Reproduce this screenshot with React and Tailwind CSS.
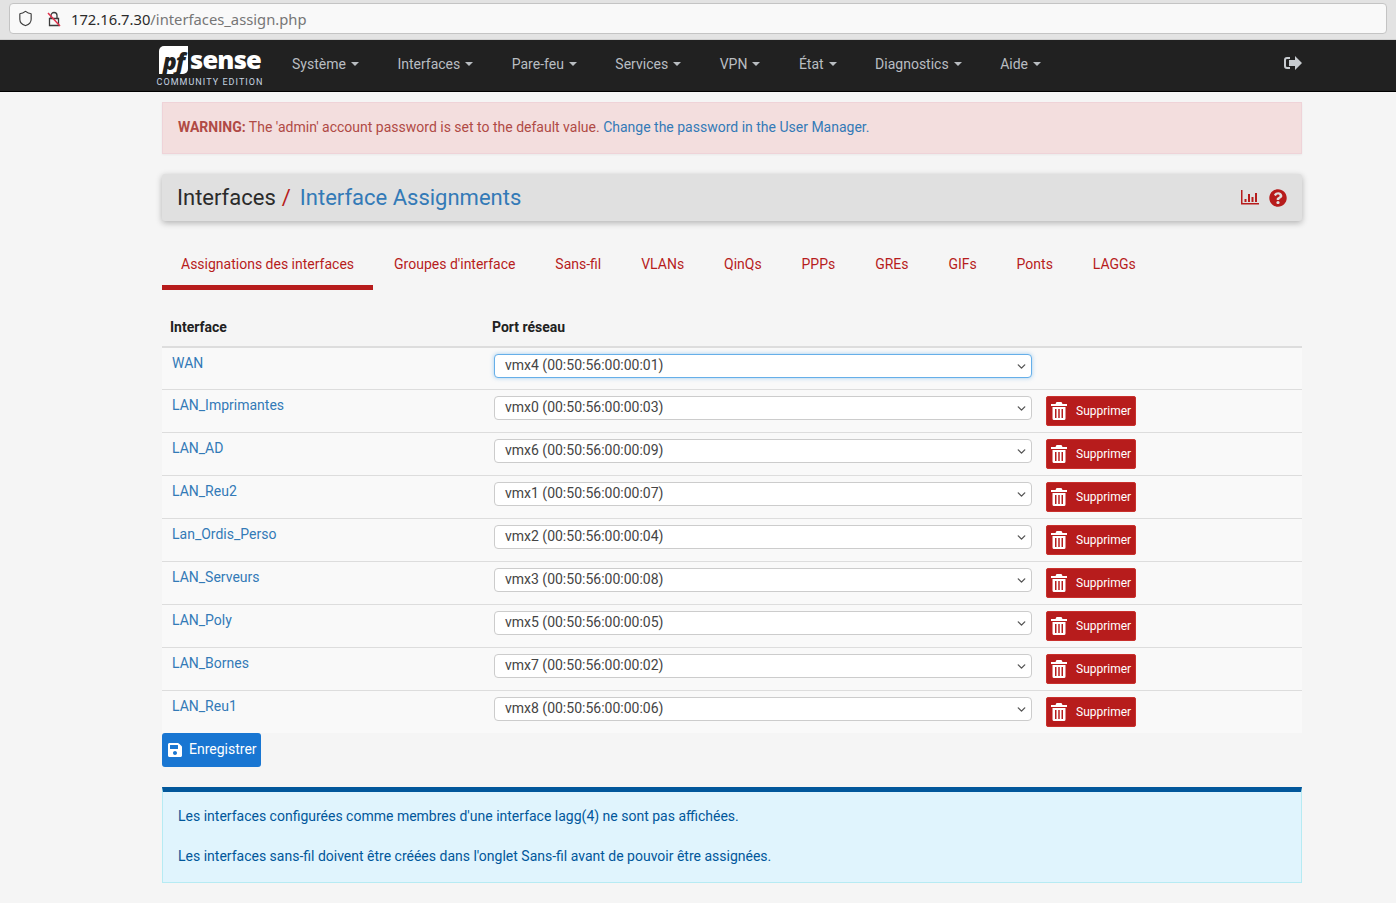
import { ChevronDown, Shield } from 'lucide-react';
import { FaSave, FaQuestionCircle } from 'react-icons/fa';

const menu = ['Système', 'Interfaces', 'Pare-feu', 'Services', 'VPN', 'État', 'Diagnostics', 'Aide'];
const tabs = ['Groupes d\'interface', 'Sans-fil', 'VLANs', 'QinQs', 'PPPs', 'GREs', 'GIFs', 'Ponts', 'LAGGs'];
const rows = [
  ['WAN', 'vmx4 (00:50:56:00:00:01)'],
  ['LAN_Imprimantes', 'vmx0 (00:50:56:00:00:03)'],
  ['LAN_AD', 'vmx6 (00:50:56:00:00:09)'],
  ['LAN_Reu2', 'vmx1 (00:50:56:00:00:07)'],
  ['Lan_Ordis_Perso', 'vmx2 (00:50:56:00:00:04)'],
  ['LAN_Serveurs', 'vmx3 (00:50:56:00:00:08)'],
  ['LAN_Poly', 'vmx5 (00:50:56:00:00:05)'],
  ['LAN_Bornes', 'vmx7 (00:50:56:00:00:02)'],
  ['LAN_Reu1', 'vmx8 (00:50:56:00:00:06)'],
];

const TrashIcon = () => (
  <svg width="16" height="18" viewBox="0 0 16 18" fill="white" aria-hidden="true">
    <path d="M5.5 0h5l1 2H16v2H0V2h4.500z" />
    <path fillRule="evenodd" d="M1.500 5h13v11.500a1.500 1.500 0 01-1.500 1.500H3a1.500 1.500 0 01-1.500-1.500zM4 7v9h1.500V7zm3.250 0v9h1.500V7zM10.500 7v9H12V7z" />
  </svg>
);

const SignOutIcon = () => (
  <svg width="18" height="14" viewBox="0 0 18 14" fill="#c8ccd0" aria-hidden="true">
    <path d="M6 1H3a3 3 0 00-3 3v6a3 3 0 003 3h3v-2H3a1 1 0 01-1-1V4a1 1 0 011-1h3z" />
    <path d="M11 0l7 7-7 7v-4H5V4h6z" />
  </svg>
);

const ChartIcon = () => (
  <svg width="18" height="15" viewBox="0 0 18 15" fill="#b71c1c" aria-hidden="true">
    <path d="M0 0h1.500v13H18v1.500H0z" />
    <path d="M3.500 9H5.500v3h-2zM7 4h2v8H7zM10.500 7h2v5h-2zM14 3h2v9h-2z" />
  </svg>
);

const App = () => {
  return (
    <div className="min-h-[903px] bg-[#f5f5f5] font-['Roboto',sans-serif] text-sm text-[#212121]">
      <div className="h-10 bg-[#e3e3e3] px-[9px] pt-[3px] border-b border-[#cfcfcf]">
        <div className="h-[31px] bg-[#f9f9f9] border border-[#c4c4c4] rounded-[4px] flex items-center pl-[7px] font-['Noto_Sans',sans-serif] text-[14.750px]">
          <Shield size={17} strokeWidth={1.600} className="text-[#3b3b3b]" />
          <svg width="16" height="16" viewBox="0 0 16 16" fill="none" className="ml-[12px]" aria-hidden="true">
            <path d="M5 7V4.500a3 3 0 016 0V7M3.500 7.500h9v7h-9z" stroke="#3b3b3b" strokeWidth="1.300" />
            <path d="M2 2l12 13" stroke="#e0314b" strokeWidth="1.500" />
          </svg>
          <span className="ml-[9px] mt-[3px] text-[#2b2b2b]">172.16.7.30</span>
          <span className="mt-[3px] text-[#767676]">/interfaces_assign.php</span>
        </div>
      </div>

      <nav className="h-[52px] bg-[#212121] border-b border-black flex items-center pl-[157px] pr-[94px]">
        <div className="w-[106px] shrink-0 flex flex-col items-center pt-[2px]">
          <div className="flex items-center h-[29px] pl-[2px] w-full">
            <span className="bg-white text-[#212121] h-[28px] w-[29px] rounded-tl-[5px] rounded-br-[5px] text-[23px] leading-[30px] font-extrabold italic font-['Open_Sans',sans-serif] tracking-[-1px] text-center">pf</span>
            <span className="text-white text-[25.500px] leading-[26px] font-extrabold font-['Open_Sans',sans-serif] tracking-[-0.800px] ml-[2px] -mt-[2px]">sense</span>
          </div>
          <span className="text-[#c5d3e0] text-[9px] leading-[11px] mt-[2px] tracking-[1.050px] whitespace-nowrap">COMMUNITY EDITION</span>
        </div>
        <ul className="flex ml-[29px] -mt-[4px] gap-[38.500px] text-[#b9bdc1] text-sm">
          {menu.map((m) => (
            <li key={m} className="flex items-center whitespace-nowrap">
              {m}
              <span className="ml-[5px] mt-px w-0 h-0 border-x-4 border-x-transparent border-t-4 border-t-[#b9bdc1]" />
            </li>
          ))}
        </ul>
        <div className="ml-auto -mt-[5px]">
          <SignOutIcon />
        </div>
      </nav>

      <main className="ml-[162px] w-[1140px] pt-[10px]">
        <div className="h-[52px] bg-[#f3dede] border border-[#efd3d8] flex items-center px-[15px] pb-[2px] text-[#b04a45] shadow-[0_1px_2px_rgba(0,0,0,0.05)]">
          <span><strong className="font-bold">WARNING:</strong> The 'admin' account password is set to the default value. <a className="text-[#337ab7]">Change the password in the User Manager.</a></span>
        </div>

        <div className="mt-[20px] h-[47px] bg-[#e0e0e0] rounded-[3px] shadow-[0_2px_6px_rgba(0,0,0,0.28)] flex items-center px-[15px] text-[22px]">
          <span className="text-[#2b2b2b]">Interfaces</span>
          <span className="text-[#b71c1c] ml-[6px]">/</span>
          <span className="text-[#337ab7] ml-[9px]">Interface Assignments</span>
          <div className="ml-auto flex items-center gap-[10px]">
            <ChartIcon />
            <FaQuestionCircle className="text-[#b71c1c]" size={18} />
          </div>
        </div>

        <div className="mt-[21px] flex text-[#b71c1c] border-transparent">
          <div className="h-[48px] px-[19px] pt-[12px] border-b-[5px] border-[#b71c1c]">Assignations des interfaces</div>
          <div className="flex pl-[21px] pt-[12px] gap-[39.900px]">
            {tabs.map((t) => <span key={t}>{t}</span>)}
          </div>
        </div>

        <div className="mt-[27px] h-[31px] flex font-bold border-b-2 border-[#dddddd] pl-[8px]">
          <span className="w-[322px]">Interface</span>
          <span>Port réseau</span>
        </div>
        {rows.map(([name, port], i) => (
          <div key={name} className={`flex bg-[#f9f9f9] pl-[10px] ${i === 0 ? 'h-[41px] pt-[6px]' : 'h-[43px] pt-[6px] border-t border-[#dddddd]'}`}>
            <a className="w-[322px] -mt-px text-[#337ab7] leading-[20px]">{name}</a>
            <div className={`w-[538px] h-[24px] bg-white rounded-[4px] border flex items-center justify-between pl-[10px] pr-[3px] text-[#444444] ${i === 0 ? 'border-[#66afe9] shadow-[0_0_4px_rgba(102,175,233,0.6)]' : 'border-[#cccccc]'}`}>
              <span className="-mt-[3px]">{port}</span>
              <ChevronDown size={13} strokeWidth={2.500} className="text-[#555555] mt-px" />
            </div>
            {i > 0 && (
              <button className="ml-[14px] w-[90px] h-[30px] bg-[#b71c1c] rounded-[2px] border border-[#c9302c] flex items-center pl-[4px] text-white text-xs">
                <TrashIcon />
                <span className="ml-[9px]">Supprimer</span>
              </button>
            )}
          </div>
        ))}

        <button className="w-[99px] h-[34px] bg-[#1976d2] rounded-[3px] flex items-center pl-[5px] text-white text-sm">
          <FaSave size={16} />
          <span className="ml-[6px] -mt-[3px]">Enregistrer</span>
        </button>

        <div className="mt-[20px] h-[96px] bg-[#e0f4fd] border border-[#b6ebf3] border-t-[5px] border-t-[#01579b] px-[15px] pt-[14px] text-[#01579b] leading-[20px]">
          <p>Les interfaces configurées comme membres d'une interface lagg(4) ne sont pas affichées.</p>
          <p className="mt-[20px]">Les interfaces sans-fil doivent être créées dans l'onglet Sans-fil avant de pouvoir être assignées.</p>
        </div>
      </main>
    </div>
  );
};

export default App;
